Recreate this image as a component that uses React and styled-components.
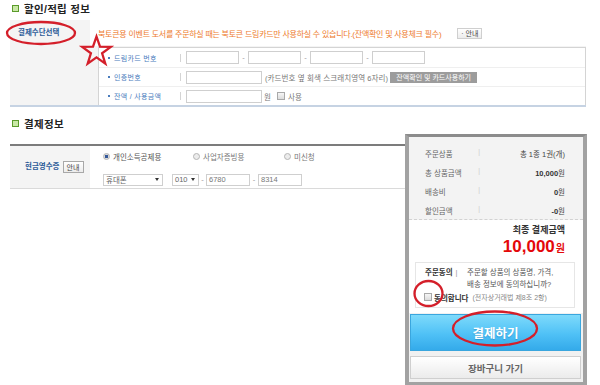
import React from 'react';
import styled, { createGlobalStyle } from 'styled-components';

const GlobalStyle = createGlobalStyle`
  * { box-sizing: border-box; }
  html, body { margin: 0; padding: 0; background: #fff; }
  body {
    font-family: "Liberation Sans", "Noto Sans CJK KR", sans-serif;
    color: #555;
  }
`;

const Page = styled.div`
  position: relative;
  width: 600px;
  height: 385px;
  overflow: hidden;
  background: #fff;
`;

const Heading = styled.h2`
  margin: 0;
  height: 16px;
  display: flex;
  align-items: center;
  gap: 5px;
  padding-left: ${p => p.$inset || 12}px;
  font-size: 10.5px;
  font-weight: bold;
  color: #222;
  letter-spacing: 0.3px;
  &::before {
    content: '';
    width: 5px;
    height: 5px;
    border: 1.5px solid #5b9b2c;
    background: #c9e8a6;
  }
`;

/* ---------- 할인/적립 정보 ---------- */

const InfoTable = styled.div`
  margin: 4px 0 0 10px;
  width: 576px;
  display: grid;
  grid-template-columns: 80px 1fr;
  border-bottom: 2px solid #c6d3e3;
`;

const HeadCell = styled.div`
  background: #f4f4f4;
  display: flex;
  align-items: ${p => (p.$center ? 'center' : 'flex-start')};
  gap: 3px;
  padding: ${p => (p.$center ? '0 0 0 15px' : '8px 0 0 8px')};
`;

const HeadLabel = styled.span`
  font-size: 7.5px;
  font-weight: bold;
  color: #2c5b98;
  line-height: 10px;
`;

const NoticeRow = styled.div`
  height: 26px;
  display: flex;
  align-items: center;
  padding-left: 8px;
  background: #fff;
`;

const Notice = styled.span`
  font-size: 8px;
  letter-spacing: -0.25px;
  color: #ee7a2c;
`;

const SmallButton = styled.span`
  display: inline-flex;
  align-items: center;
  justify-content: center;
  width: ${p => p.$w}px;
  height: ${p => p.$h}px;
  margin-left: ${p => p.$gap || 0}px;
  border: 1px solid ${p => p.$border || '#cfcfcf'};
  background: linear-gradient(#ffffff, #ececec);
  font-size: 7px;
  color: #444;
`;

const CardWrap = styled.div`
  background: #f4f4f4;
  padding: 1px 0 0 8px;
`;

const CardBox = styled.div`
  background: #fff;
  border: 1px solid #d4d4d4;
  border-bottom: none;
`;

const CardRow = styled.div`
  height: 19px;
  display: flex;
  align-items: center;
  & + & { border-top: 1px solid #efefef; }
`;

const RowLabel = styled.span`
  width: 81px;
  padding-left: 9px;
  display: flex;
  align-items: center;
  gap: 4px;
  font-size: 7px;
  color: #4a7cbd;
  letter-spacing: 0.3px;
  &::before {
    content: '';
    width: 2px;
    height: 2px;
    background: #4a7cbd;
  }
`;

const Divider = styled.span`
  width: 1px;
  height: 8px;
  margin-right: 5px;
  background: #d4d4d4;
`;

const Field = styled.span`
  display: inline-flex;
  align-items: center;
  width: ${p => p.$w}px;
  height: ${p => p.$h || 13}px;
  border: 1px solid #cfcfcf;
  background: #fff;
  padding-left: 2px;
  font-size: 7.5px;
  color: #777;
`;

const Dash = styled.span`
  width: ${p => p.$w || 9}px;
  text-align: center;
  font-size: 7.5px;
  color: #999;
`;

const Hint = styled.span`
  margin: 0 ${p => p.$right || 0}px 0 ${p => p.$left || 3}px;
  font-size: 7.5px;
  color: #777;
  letter-spacing: 0.1px;
`;

const GrayButton = styled.span`
  display: inline-flex;
  align-items: center;
  justify-content: center;
  width: 87px;
  height: 11px;
  background: #9c9c9c;
  color: #fff;
  font-size: 7px;
`;

const CheckBox = styled.span`
  width: 8px;
  height: 8px;
  margin: 0 ${p => p.$right || 2}px 0 ${p => p.$left || 0}px;
  border: 1px solid #a9a9a9;
  background: linear-gradient(#f6f6f6, #dcdcdc);
`;

/* ---------- 결제정보 ---------- */

const Bottom = styled.div`
  display: flex;
  align-items: flex-start;
  margin-top: 8px;
`;

const LeftColumn = styled.div`
  width: 395px;
  margin-left: 10px;
`;

const PayTable = styled.div`
  margin-top: 13px;
  display: grid;
  grid-template-columns: 80px 1fr;
  height: 45px;
  border-top: 2px solid #7c7c7c;
  border-bottom: 1px solid #dadada;
`;

const PayCell = styled.div`
  padding: 5px 0 0 13px;
  display: flex;
  flex-direction: column;
  gap: 12px;
`;

const Line = styled.div`
  height: 11px;
  display: flex;
  align-items: center;
`;

const Option = styled.span`
  width: ${p => p.$w}px;
  display: flex;
  align-items: center;
  gap: 3px;
  font-size: 7.5px;
  color: ${p => (p.$checked ? '#555' : '#777')};
`;

const Radio = styled.span`
  width: 7px;
  height: 7px;
  border-radius: 50%;
  border: 1px solid #b5b5b5;
  background: ${p => (p.$checked ? 'radial-gradient(circle, #34589a 45%, #dcdcdc 50%)' : '#ececec')};
`;

const Select = styled.span`
  width: ${p => p.$w}px;
  height: 12px;
  margin-right: ${p => p.$gap || 0}px;
  display: inline-flex;
  align-items: center;
  justify-content: space-between;
  padding: 0 3px 0 2px;
  border: 1px solid #cfcfcf;
  font-size: 7.5px;
  color: #666;
  &::after {
    content: '';
    border-left: 2.5px solid transparent;
    border-right: 2.5px solid transparent;
    border-top: 3px solid #333;
  }
`;

/* ---------- 주문 요약 패널 ---------- */

const Panel = styled.aside`
  width: 182px;
  height: 252px;
  margin-top: 19px;
  border: 4px solid #a2a2a2;
  border-top: 3px solid #8c8c8c;
  background: #fff;
  display: flex;
  flex-direction: column;
`;

const Summary = styled.div`
  background: #f3f3f3;
  padding: 7px 18px 0 16px;
  height: 83px;
  border-bottom: 1px dashed #d2d2d2;
`;

const SumRow = styled.div`
  height: 19px;
  display: grid;
  grid-template-columns: 55px 1fr;
  align-items: center;
  font-size: 7.5px;
  color: #666;
`;

const SumLabel = styled.span`
  display: flex;
  justify-content: space-between;
  &::after { content: '|'; color: #ccc; font-size: 7px; }
`;

const SumValue = styled.span`
  text-align: right;
  color: #444;
  b { color: #333; }
`;

const Final = styled.div`
  padding: 4px 18px 0 0;
  text-align: right;
`;

const FinalLabel = styled.div`
  font-size: 9px;
  font-weight: bold;
  color: #333;
  line-height: 13px;
`;

const FinalPrice = styled.div`
  line-height: 20px;
  color: #e4080a;
  font-weight: bold;
  font-size: 17px;
  small { font-size: 10px; margin-left: 1px; }
`;

const Agree = styled.div`
  margin: 3px 8px 0 6px;
  padding: 4px 4px 4px 9px;
  border: 1px solid #e6e6e6;
  display: grid;
  grid-template-columns: 42px 1fr;
`;

const AgreeTitle = styled.span`
  font-size: 7.5px;
  font-weight: bold;
  color: #333;
  line-height: 12px;
  span { font-weight: normal; color: #999; margin-left: 3px; }
`;

const AgreeText = styled.span`
  font-size: 7.5px;
  line-height: 12px;
  color: #555;
`;

const AgreeCheck = styled.label`
  grid-column: 1 / -1;
  height: 12px;
  display: flex;
  align-items: center;
  margin-left: -1px;
  font-size: 7.5px;
  font-weight: bold;
  color: #333;
  small { font-size: 7px; font-weight: normal; color: #888; margin-left: 4px; }
`;

const Actions = styled.div`
  margin-top: 5px;
  flex: 1;
  background: #f1f1f1;
  padding: 1px 2px 0 1px;
  display: flex;
  flex-direction: column;
  gap: 5px;
`;

const PayButton = styled.button`
  height: 37px;
  border: 1px solid #3aa6de;
  background: linear-gradient(#7edafb, #4fc1f6 55%, #34aaea);
  color: #fff;
  font-family: inherit;
  font-size: 12.5px;
  font-weight: bold;
  text-shadow: 0 1px 1px rgba(0, 90, 150, 0.35);
`;

const CartButton = styled.button`
  height: 23px;
  border: 1px solid #cfcfcf;
  background: linear-gradient(#ffffff, #ebebeb);
  color: #666;
  font-family: inherit;
  font-size: 9.5px;
  font-weight: bold;
`;

/* ---------- 빨간 표시 ---------- */

const Marks = styled.svg`
  position: absolute;
  left: 0;
  top: 0;
  pointer-events: none;
`;

const starPoints = Array.from({ length: 10 }, (_, i) => {
  const a = ((-90 + i * 36) * Math.PI) / 180;
  const r = i % 2 ? 5.9 : 15;
  return `${(96.5 + r * Math.cos(a)).toFixed(1)},${(51.5 + r * Math.sin(a)).toFixed(1)}`;
}).join(' ');

const summary = [
  { label: '주문상품', value: '총 1종 1권(개)' },
  { label: '총 상품금액', amount: '10,000' },
  { label: '배송비', amount: '0' },
  { label: '할인금액', amount: '-0' },
];

export default function App() {
  return (
    <Page>
      <GlobalStyle />
      <Heading>할인/적립 정보</Heading>

      <InfoTable>
        <HeadCell>
          <HeadLabel>결제수단선택</HeadLabel>
        </HeadCell>
        <div>
          <NoticeRow>
            <Notice>
              북토큰용 이벤트 도서를 주문하실 때는 북토큰 드림카드만 사용하실 수 있습니다.(잔액확인 및 사용체크 필수)
            </Notice>
            <SmallButton $w={25} $h={11} $gap={16}>· 안내</SmallButton>
          </NoticeRow>
          <CardWrap>
            <CardBox>
              <CardRow>
                <RowLabel>드림카드 번호</RowLabel>
                <Divider />
                <Field $w={53} />
                <Dash>-</Dash>
                <Field $w={53} />
                <Dash>-</Dash>
                <Field $w={53} />
                <Dash>-</Dash>
                <Field $w={53} />
              </CardRow>
              <CardRow>
                <RowLabel>인증번호</RowLabel>
                <Divider />
                <Field $w={76} />
                <Hint $right={2}>(카드번호 옆 회색 스크래치영역 6자리)</Hint>
                <GrayButton>잔액확인 및 카드사용하기</GrayButton>
              </CardRow>
              <CardRow>
                <RowLabel>잔액 / 사용금액</RowLabel>
                <Divider />
                <Field $w={76} />
                <Hint $left={2}>원</Hint>
                <CheckBox $left={6} />
                <Hint $left={1}>사용</Hint>
              </CardRow>
            </CardBox>
          </CardWrap>
        </div>
      </InfoTable>

      <Bottom>
        <LeftColumn>
          <Heading $inset={2}>결제정보</Heading>
          <PayTable>
            <HeadCell $center>
              <HeadLabel>현금영수증</HeadLabel>
              <SmallButton $w={21} $h={12} $border="#a8a8a8">안내</SmallButton>
            </HeadCell>
            <PayCell>
              <Line>
                <Option $w={90} $checked>
                  <Radio $checked />
                  개인소득공제용
                </Option>
                <Option $w={91}>
                  <Radio />
                  사업자증빙용
                </Option>
                <Option $w={60}>
                  <Radio />
                  미신청
                </Option>
              </Line>
              <Line>
                <Select $w={60} $gap={9}>휴대폰</Select>
                <Select $w={27}>010</Select>
                <Dash $w={7}>-</Dash>
                <Field $w={44} $h={12}>6780</Field>
                <Dash $w={8}>-</Dash>
                <Field $w={44} $h={12}>8314</Field>
              </Line>
            </PayCell>
          </PayTable>
        </LeftColumn>

        <Panel>
          <Summary>
            {summary.map(row => (
              <SumRow key={row.label}>
                <SumLabel>{row.label}</SumLabel>
                <SumValue>
                  {row.value || (
                    <>
                      <b>{row.amount}</b>원
                    </>
                  )}
                </SumValue>
              </SumRow>
            ))}
          </Summary>
          <Final>
            <FinalLabel>최종 결제금액</FinalLabel>
            <FinalPrice>
              10,000<small>원</small>
            </FinalPrice>
          </Final>
          <Agree>
            <AgreeTitle>
              주문동의<span>|</span>
            </AgreeTitle>
            <AgreeText>
              주문할 상품의 상품명, 가격,
              <br />
              배송 정보에 동의하십니까?
            </AgreeText>
            <AgreeCheck>
              <CheckBox $right={2} />
              동의합니다
              <small>(전자상거래법 제8조 2항)</small>
            </AgreeCheck>
          </Agree>
          <Actions>
            <PayButton>결제하기</PayButton>
            <CartButton>장바구니 가기</CartButton>
          </Actions>
        </Panel>
      </Bottom>

      <Marks width="600" height="385" viewBox="0 0 600 385">
        <g fill="none" stroke="#d41f2a" strokeWidth="2.3">
          <ellipse cx="41" cy="33" rx="34" ry="11" />
          <polygon points={starPoints} strokeLinejoin="miter" />
          <ellipse cx="428.5" cy="293.5" rx="14" ry="12.5" />
          <ellipse cx="495" cy="328.5" rx="42" ry="17" />
        </g>
      </Marks>
    </Page>
  );
}
